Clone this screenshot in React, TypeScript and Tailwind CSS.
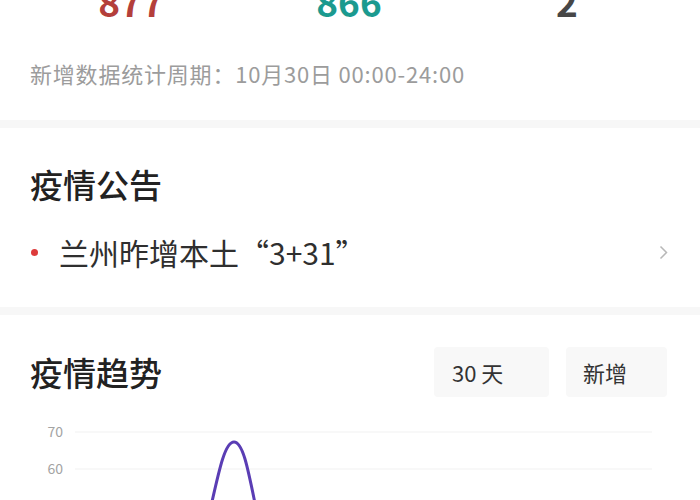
const font = { fontFamily: '"Noto Sans CJK SC", "Noto Sans", sans-serif' };

function Stat({ value, color }: { value: string; color: string }) {
  return (
    <div className={`flex-1 text-center text-[37px] leading-[36px] font-bold ${color}`}>{value}</div>
  );
}

function Divider() {
  return <div className="h-[8px] bg-[#f7f7f7]" />;
}

function TrendChart() {
  const grid = [
    { label: "70", y: 35 },
    { label: "60", y: 72 },
    { label: "50", y: 109 },
    { label: "40", y: 146 },
  ];
  return (
    <svg width="700" height="180" viewBox="0 0 700 180" className="block">
      {grid.map((g) => (
        <g key={g.label}>
          <line x1="75" x2="652" y1={g.y} y2={g.y} stroke="#f1f1f1" strokeWidth="1" />
          <text x="63" y={g.y + 5} textAnchor="end" fontSize="14" fill="#a3a3a3" style={font}>
            {g.label}
          </text>
        </g>
      ))}
      <path
        d="M 204 140 C 217 85, 223 45, 234 45 C 245 45, 250 85, 262 140"
        fill="none"
        stroke="#5a3db4"
        strokeWidth="3"
        strokeLinecap="round"
      />
    </svg>
  );
}

export default function App() {
  return (
    <div className="w-[700px] h-[500px] overflow-hidden bg-white" style={font}>
      <section className="pb-[33px]">
        <div className="flex px-[22px] pr-[24px] -mt-[17px]">
          <Stat value="877" color="text-[#b43f3b]" />
          <Stat value="866" color="text-[#1b9a8f]" />
          <Stat value="2" color="text-[#474747]" />
        </div>
        <p className="mt-[40px] px-[30px] text-[22px] leading-[28px] tracking-[0.8px] text-[#9c9c9c]">
          新增数据统计周期：10月30日 00:00-24:00
        </p>
      </section>
      <Divider />
      <section className="px-[30px] pt-[36px] pb-[37px]">
        <h2 className="text-[33px] leading-[40px] font-medium text-[#222]">疫情公告</h2>
        <div className="mt-[30px] flex items-center">
          <span className="w-[7px] h-[7px] rounded-full bg-[#dd3b3b] ml-[1px] mr-[21px]" />
          <span className="flex-1 text-[30px] leading-[36px] text-[#2f2f2f]">兰州昨增本土“3+31”</span>
          <svg width="9" height="15" viewBox="0 0 9 15" className="mr-[2px]">
            <polyline points="1.5,1.5 7.5,7.5 1.5,13.5" fill="none" stroke="#b8b8b8" strokeWidth="1.5" />
          </svg>
        </div>
      </section>
      <Divider />
      <section className="pt-[32px]">
        <div className="flex items-center h-[50px] pl-[30px] pr-[33px]">
          <h2 className="flex-1 text-[33px] leading-[40px] font-medium text-[#222]">疫情趋势</h2>
          <div className="flex gap-[17px]">
            <div className="w-[115px] h-[50px] rounded-[4px] bg-[#f8f8f8] flex items-center pl-[18px] text-[22px] text-[#333]">
              30 天
            </div>
            <div className="w-[101px] h-[50px] rounded-[4px] bg-[#f8f8f8] flex items-center pl-[17px] text-[22px] text-[#333]">
              新增
            </div>
          </div>
        </div>
        <TrendChart />
      </section>
    </div>
  );
}
